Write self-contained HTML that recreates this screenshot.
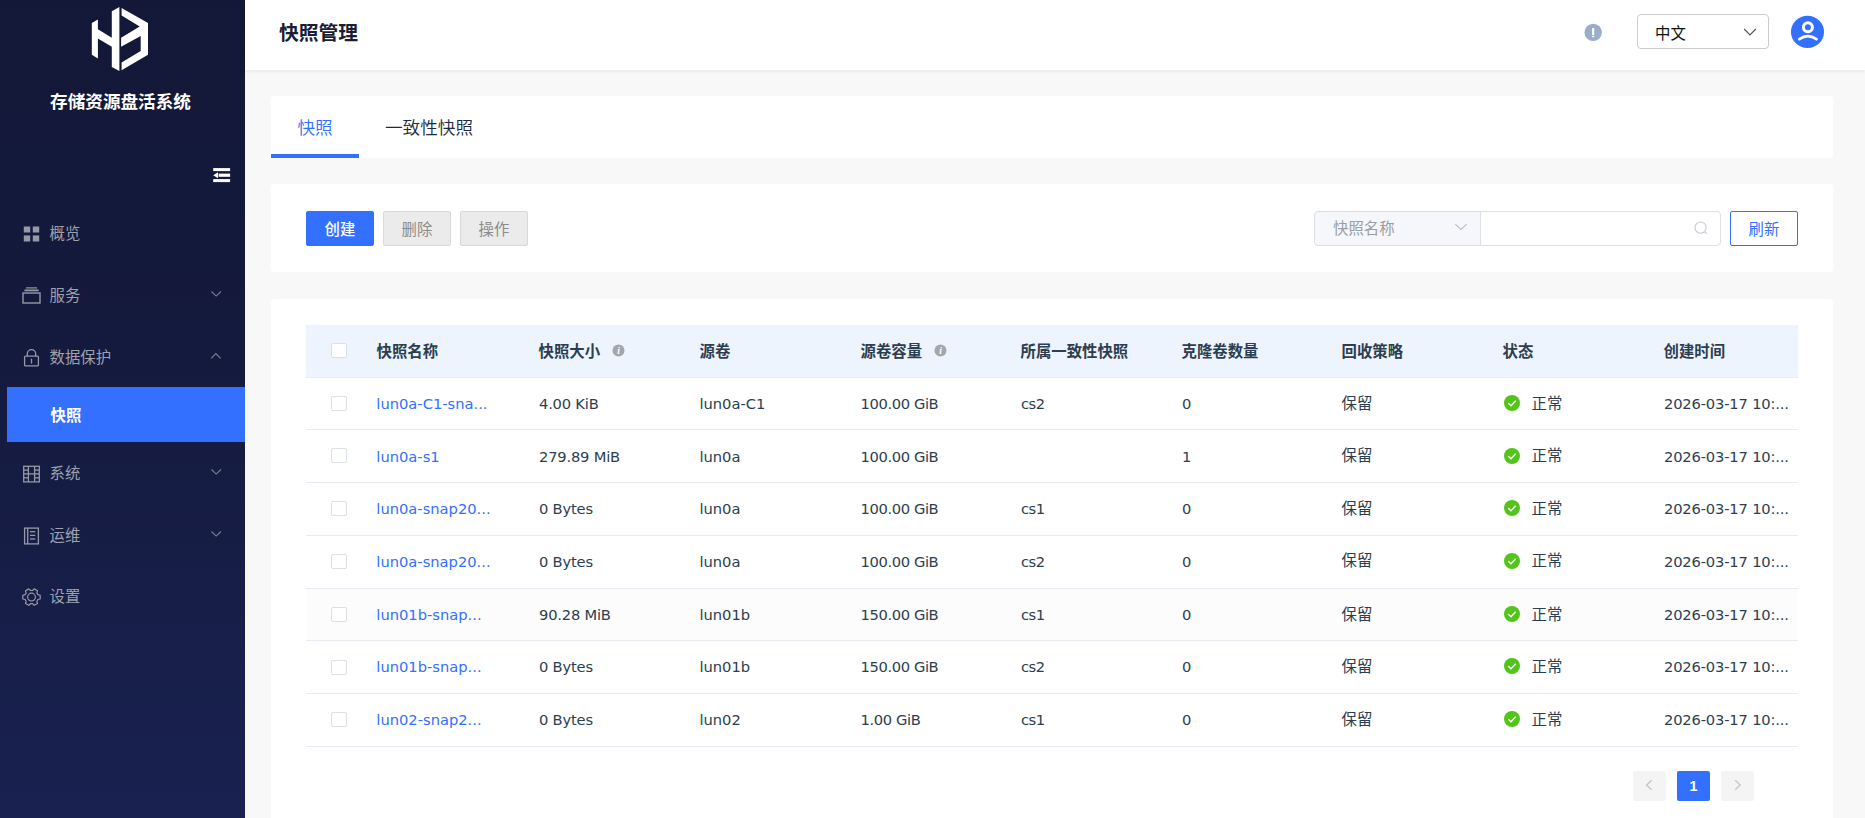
<!DOCTYPE html>
<html lang="zh-CN">
<head>
<meta charset="utf-8">
<title>快照管理</title>
<style>
*{box-sizing:border-box;margin:0;padding:0}
html,body{width:1865px;height:818px;overflow:hidden}
body{position:relative;background:#f8f8f9;font-family:"Liberation Sans","Noto Sans CJK SC",sans-serif;font-size:15.4px;color:#303133}
.abs{position:absolute}
#side{position:absolute;left:0;top:0;width:245px;height:818px;background:linear-gradient(180deg,#131838 0%,#141a3d 40%,#192150 100%)}
#side .title{position:absolute;left:0;width:241px;top:89px;height:26px;line-height:26px;text-align:center;color:#fff;font-weight:700;font-size:17.6px}
.mi{position:absolute;left:0;width:245px;height:55px;line-height:55px;color:#9ea1ae;font-size:15.4px}
.mi .tx{position:absolute;left:49.5px;top:.7px}
.mi svg{position:absolute}
.mi.act{left:7px;width:238px;background:#3370ff;color:#fff;font-weight:700}
.mi.act .tx{left:43.5px}
#hdr{position:absolute;left:245px;top:0;width:1620px;height:70px;background:#fff;box-shadow:0 1px 4px rgba(0,21,41,.08)}
#hdr h1{position:absolute;left:34px;top:17.5px;font-size:19.8px;line-height:30px;font-weight:700;color:#1a1f36}
.card{position:absolute;background:#fff;border-radius:4px}
.tab{position:absolute;top:1px;height:62px;line-height:62px;font-size:17.6px;font-weight:350;color:#1f2a3d}
.btn{position:absolute;top:27px;height:35px;line-height:35px;width:68px;text-align:center;border-radius:2px;font-size:15.4px;border:1px solid transparent}
.btn.pri{background:#3370ff;border-color:#3370ff;color:#fff;font-weight:500}
.btn.dis{background:#ebebeb;border-color:#d9d9d9;color:#8c8c8c}
.btn.ol{background:#fff;border-color:#3370ff;color:#3370ff}
#tbl{position:absolute;left:35px;top:25.6px;width:1492px}
.tr{position:relative;height:52.8px;line-height:52.8px;border-bottom:1px solid #e6ebf5;white-space:nowrap}
.tr.th{background:#eef4fd;font-weight:700;color:#2c3e50;border-bottom:0}
.tr.th:after{content:'';position:absolute;left:0;right:0;top:52.4px;height:1px;background:#e6ebf5;z-index:2}
.tr span.c{position:absolute;top:0;height:52px}
.cb{position:absolute;left:24.8px;top:18.3px;width:16px;height:15px;border:1px solid #dcdfe6;border-radius:2px;background:#fff}
.tr.hv{background:#fcfcfc}
.tr.up span.c,.tr.up .ok{margin-top:-.8px}
.tr.up2 span.c,.tr.up2 .ok{margin-top:-.5px}
.tr span.n6,.tr span.n7{top:.2px}
.tr.th span.c{top:1px}
.lk{color:#3370ff}
.n0,.n1,.n2,.n3,.n4,.n5,.n8{font-family:"DejaVu Sans","Liberation Sans",sans-serif;font-size:14.7px;color:#2c3e50}
.tr span.n0,.tr span.n1,.tr span.n2,.tr span.n3,.tr span.n4,.tr span.n5,.tr span.n8{top:.7px}
.n1{letter-spacing:-.2px}.n3{letter-spacing:-.38px}.n4{letter-spacing:-.5px}.n8{letter-spacing:-.17px}
.n0{color:#3370ff}
.n6,.n7{color:#2c3e50}
.ok{position:absolute;top:17.8px;width:16px;height:16px}
.inf{display:inline-block;vertical-align:-.8px;margin-left:12.1px}
.pg{position:absolute;top:472px;width:33px;height:30px;border-radius:2px;background:#f4f4f5;text-align:center;line-height:30px;font-size:14.3px}
.pg.on{background:#3370ff;color:#fff;font-weight:700}
</style>
</head>
<body>
<div id="side">
  <svg class="abs" style="left:88px;top:4px" width="64" height="70" viewBox="88 4 64 70">
    <g fill="#fff">
      <polygon points="91.8,23 97.9,19.6 97.9,29.3 111.8,37.7 111.8,11.2 119.4,7 119.4,70.9 111.8,67 111.8,46.7 97.9,38.6 97.9,58.4 91.8,54.8"/>
      <polygon points="121.6,8 148,23 148,54.8 121.6,70.2 121.6,62.6 140.7,50.9 140.7,36 121.1,46.7 121.1,37.7 139.7,26.6 121.6,15.6"/>
    </g>
  </svg>
  <div class="title">存储资源盘活系统</div>
  <svg class="abs" style="left:212px;top:166px" width="20" height="18" viewBox="212 166 20 18"><g fill="#fff"><rect x="213.2" y="168.1" width="16.9" height="3"/><rect x="218.6" y="173.6" width="11.5" height="3.2"/><rect x="213.2" y="179.1" width="16.9" height="3"/><polygon points="213.2,175.2 218,172.2 218,178.2"/></g></svg>

  <div class="mi" style="top:205.5px">
    <svg style="left:22px;top:19px" width="20" height="18" viewBox="22 224.5 20 18"><g fill="#9699a6"><rect x="23.8" y="226" width="6.4" height="6"/><rect x="32.8" y="226" width="6.4" height="6"/><rect x="23.8" y="234.9" width="6.4" height="6.1"/><rect x="32.8" y="234.9" width="6.4" height="6.1"/></g></svg>
    <span class="tx">概览</span>
  </div>
  <div class="mi" style="top:267.5px">
    <svg style="left:20px;top:17px" width="24" height="22" viewBox="20 284.5 24 22"><g fill="none" stroke="#9699a6"><rect x="23" y="292.5" width="17" height="10" stroke-width="1.4"/><line x1="24.4" y1="289.9" x2="38.6" y2="289.9" stroke-width="1.8"/><line x1="26" y1="287.4" x2="37" y2="287.4" stroke-width="1.2"/></g></svg>
    <span class="tx">服务</span>
    <svg style="left:208px;top:20px" width="16" height="12" viewBox="208 287.5 16 12"><polyline points="211.5,291 216.2,295.6 220.9,291" fill="none" stroke="#7b7f94" stroke-width="1.1"/></svg>
  </div>
  <div class="mi" style="top:329.5px">
    <svg style="left:20px;top:16px" width="24" height="24" viewBox="20 345.5 24 24"><g fill="none" stroke="#9699a6" stroke-width="1.3"><rect x="24.6" y="355.6" width="13.8" height="9.8" rx="1"/><path d="M27.3 355.6v-2.2a4.2 4.2 0 0 1 8.4 0v2.2"/><line x1="31.5" y1="358.2" x2="31.5" y2="363"/></g></svg>
    <span class="tx">数据保护</span>
    <svg style="left:208px;top:20px" width="16" height="12" viewBox="208 349.5 16 12"><polyline points="211.2,357.8 215.9,353.1 220.6,357.8" fill="none" stroke="#7b7f94" stroke-width="1.1"/></svg>
  </div>
  <div class="mi act" style="top:387px"><span class="tx">快照</span></div>
  <div class="mi" style="top:445.5px">
    <svg style="left:20px;top:17px" width="24" height="22" viewBox="20 462.5 24 22"><g fill="none" stroke="#9699a6" stroke-width="1.3"><rect x="23.7" y="465.8" width="15.6" height="15.6"/><line x1="28.4" y1="465.8" x2="28.4" y2="481.4"/><line x1="34.6" y1="465.8" x2="34.6" y2="481.4"/><line x1="23.7" y1="473.4" x2="39.3" y2="473.4"/><line x1="23.7" y1="469.6" x2="28.4" y2="469.6"/><line x1="23.7" y1="477.3" x2="28.4" y2="477.3"/><line x1="34.6" y1="469.6" x2="39.3" y2="469.6"/><line x1="34.6" y1="477.3" x2="39.3" y2="477.3"/></g></svg>
    <span class="tx">系统</span>
    <svg style="left:208px;top:20px" width="16" height="12" viewBox="208 287.5 16 12"><polyline points="211.5,291 216.2,295.6 220.9,291" fill="none" stroke="#7b7f94" stroke-width="1.1"/></svg>
  </div>
  <div class="mi" style="top:507.5px">
    <svg style="left:20px;top:17px" width="24" height="24" viewBox="20 524.5 24 24"><g fill="none" stroke="#9699a6" stroke-width="1.3"><rect x="24.6" y="527.6" width="13.8" height="15.8"/><line x1="27.7" y1="527.6" x2="27.7" y2="543.4"/><line x1="30" y1="531.2" x2="35.3" y2="531.2"/><line x1="30" y1="534.9" x2="35.3" y2="534.9"/><line x1="30" y1="538.5" x2="35.3" y2="538.5"/></g></svg>
    <span class="tx">运维</span>
    <svg style="left:208px;top:20px" width="16" height="12" viewBox="208 287.5 16 12"><polyline points="211.5,291 216.2,295.6 220.9,291" fill="none" stroke="#7b7f94" stroke-width="1.1"/></svg>
  </div>
  <div class="mi" style="top:568.5px">
    <svg style="left:20px;top:16px" width="24" height="24" viewBox="20 584.5 24 24"><g fill="none" stroke="#9699a6" stroke-width="1.2"><circle cx="31.5" cy="596.6" r="3.9"/><path d="M37.94 594.20 L40.19 594.73 L40.19 598.47 L37.94 599.00 L36.86 600.81 L37.51 602.96 L34.18 604.83 L32.58 603.21 L30.42 603.21 L28.82 604.83 L25.49 602.96 L26.14 600.81 L25.06 599.00 L22.81 598.47 L22.81 594.73 L25.06 594.20 L26.14 592.39 L25.49 590.24 L28.82 588.37 L30.42 589.99 L32.58 589.99 L34.18 588.37 L37.51 590.24 L36.86 592.39Z" stroke-linejoin="round"/></g></svg>
    <span class="tx">设置</span>
  </div>
</div>

<div id="hdr">
  <h1>快照管理</h1>
  <svg class="abs" style="left:1338px;top:22px" width="20" height="20" viewBox="0 0 20 20"><circle cx="10.2" cy="10.35" r="8.7" fill="#9aaeca"/><rect x="9.05" y="6.1" width="2.2" height="7" fill="#fff"/><rect x="9.05" y="13.9" width="2.2" height="1.3" fill="#fff"/></svg>
  <div class="abs" style="left:1392px;top:14px;width:132px;height:35px;border:1px solid #ccc;border-radius:4px;background:#fff">
    <span class="abs" style="left:17px;line-height:35px;font-size:15.4px;color:#111;top:1px">中文</span>
    <svg class="abs" style="left:104px;top:11px" width="16" height="12" viewBox="0 0 16 12"><polyline points="2.2,3 8,8.8 13.8,3" fill="none" stroke="#555" stroke-width="1.2"/></svg>
  </div>
  <svg class="abs" style="left:1545px;top:15px" width="36" height="34" viewBox="0 0 36 34"><ellipse cx="17.5" cy="16.9" rx="16.5" ry="16.1" fill="#3370ff"/><circle cx="17.9" cy="12.2" r="4.5" fill="none" stroke="#fff" stroke-width="3"/><path d="M9.4 24.1Q17.9 18.1 26.4 24.1" fill="none" stroke="#fff" stroke-width="2.8" stroke-linecap="round"/></svg>
</div>

<div class="card" style="left:271px;top:96px;width:1562px;height:62px;border-radius:4px 4px 0 0">
  <div class="tab" style="left:26.5px;color:#3370ff">快照</div>
  <div class="tab" style="left:114px">一致性快照</div>
  <div class="abs" style="left:0;top:58px;width:88px;height:4px;background:#3370ff"></div>
</div>

<div class="card" style="left:271px;top:184px;width:1562px;height:88px">
  <div class="btn pri" style="left:35px">创建</div>
  <div class="btn dis" style="left:112px">删除</div>
  <div class="btn dis" style="left:189px">操作</div>
  <div class="abs" style="left:1043px;top:27px;width:167px;height:35px;border:1px solid #dcdfe6;border-radius:4px 0 0 4px;background:#f5f7fa">
    <span class="abs" style="left:18px;top:0;line-height:34px;color:#9a9da3">快照名称</span>
    <svg class="abs" style="left:138.6px;top:9.3px" width="14" height="12" viewBox="0 0 14 12"><polyline points="1.3,3.1 7,8.5 12.7,3.1" fill="none" stroke="#b9bdc5" stroke-width="1.1"/></svg>
  </div>
  <div class="abs" style="left:1209px;top:27px;width:241px;height:35px;border:1px solid #dcdfe6;border-radius:0 4px 4px 0;background:#fff">
    <svg class="abs" style="left:211.4px;top:7.2px" width="18" height="18" viewBox="0 0 18 18"><circle cx="8.6" cy="8.6" r="5.6" fill="none" stroke="#c6cad2" stroke-width="1.1"/><line x1="12.6" y1="12.6" x2="14.9" y2="14.9" stroke="#c6cad2" stroke-width="1.1"/></svg>
  </div>
  <div class="btn ol" style="left:1459px">刷新</div>
</div>
<div class="card" style="left:271px;top:299px;width:1562px;height:540px">
<div id="tbl">
<div class="tr th"><i class="cb"></i><span class="c" style="left:70.5px">快照名称</span><span class="c" style="left:232.5px">快照大小<svg class="inf" width="13" height="13" viewBox="0 0 13 13"><circle cx="6.5" cy="6.5" r="6" fill="#a3a6ad"/><text x="6.5" y="10" text-anchor="middle" font-family="Liberation Serif,serif" font-style="italic" font-weight="700" font-size="9.5" fill="#fff">i</text></svg></span><span class="c" style="left:393.5px">源卷</span><span class="c" style="left:554.5px">源卷容量<svg class="inf" width="13" height="13" viewBox="0 0 13 13"><circle cx="6.5" cy="6.5" r="6" fill="#a3a6ad"/><text x="6.5" y="10" text-anchor="middle" font-family="Liberation Serif,serif" font-style="italic" font-weight="700" font-size="9.5" fill="#fff">i</text></svg></span><span class="c" style="left:714.5px">所属一致性快照</span><span class="c" style="left:875.5px">克隆卷数量</span><span class="c" style="left:1035.5px">回收策略</span><span class="c" style="left:1196.5px">状态</span><span class="c" style="left:1357.5px">创建时间</span></div>
<div class="tr"><i class="cb"></i><span class="c lk n0" style="left:70.3px">lun0a-C1-sna...</span><span class="c n1" style="left:233px">4.00 KiB</span><span class="c n2" style="left:393.4px">lun0a-C1</span><span class="c n3" style="left:554.5px">100.00 GiB</span><span class="c n4" style="left:715px">cs2</span><span class="c n5" style="left:876px">0</span><span class="c n6" style="left:1035.5px">保留</span><svg class="ok" style="left:1198px" viewBox="0 0 16 16"><circle cx="8" cy="8" r="8" fill="#52c41a"/><polyline points="4.3,8.2 7,10.8 11.7,5.8" fill="none" stroke="#fff" stroke-width="1.35"/></svg><span class="c n7" style="left:1225.5px">正常</span><span class="c n8" style="left:1358px">2026-03-17 10:...</span></div>
<div class="tr"><i class="cb"></i><span class="c lk n0" style="left:70.3px">lun0a-s1</span><span class="c n1" style="left:233px">279.89 MiB</span><span class="c n2" style="left:393.4px">lun0a</span><span class="c n3" style="left:554.5px">100.00 GiB</span><span class="c n4" style="left:715px"></span><span class="c n5" style="left:876px">1</span><span class="c n6" style="left:1035.5px">保留</span><svg class="ok" style="left:1198px" viewBox="0 0 16 16"><circle cx="8" cy="8" r="8" fill="#52c41a"/><polyline points="4.3,8.2 7,10.8 11.7,5.8" fill="none" stroke="#fff" stroke-width="1.35"/></svg><span class="c n7" style="left:1225.5px">正常</span><span class="c n8" style="left:1358px">2026-03-17 10:...</span></div>
<div class="tr up2"><i class="cb"></i><span class="c lk n0" style="left:70.3px">lun0a-snap20...</span><span class="c n1" style="left:233px">0 Bytes</span><span class="c n2" style="left:393.4px">lun0a</span><span class="c n3" style="left:554.5px">100.00 GiB</span><span class="c n4" style="left:715px">cs1</span><span class="c n5" style="left:876px">0</span><span class="c n6" style="left:1035.5px">保留</span><svg class="ok" style="left:1198px" viewBox="0 0 16 16"><circle cx="8" cy="8" r="8" fill="#52c41a"/><polyline points="4.3,8.2 7,10.8 11.7,5.8" fill="none" stroke="#fff" stroke-width="1.35"/></svg><span class="c n7" style="left:1225.5px">正常</span><span class="c n8" style="left:1358px">2026-03-17 10:...</span></div>
<div class="tr up2"><i class="cb"></i><span class="c lk n0" style="left:70.3px">lun0a-snap20...</span><span class="c n1" style="left:233px">0 Bytes</span><span class="c n2" style="left:393.4px">lun0a</span><span class="c n3" style="left:554.5px">100.00 GiB</span><span class="c n4" style="left:715px">cs2</span><span class="c n5" style="left:876px">0</span><span class="c n6" style="left:1035.5px">保留</span><svg class="ok" style="left:1198px" viewBox="0 0 16 16"><circle cx="8" cy="8" r="8" fill="#52c41a"/><polyline points="4.3,8.2 7,10.8 11.7,5.8" fill="none" stroke="#fff" stroke-width="1.35"/></svg><span class="c n7" style="left:1225.5px">正常</span><span class="c n8" style="left:1358px">2026-03-17 10:...</span></div>
<div class="tr hv"><i class="cb"></i><span class="c lk n0" style="left:70.3px">lun01b-snap...</span><span class="c n1" style="left:233px">90.28 MiB</span><span class="c n2" style="left:393.4px">lun01b</span><span class="c n3" style="left:554.5px">150.00 GiB</span><span class="c n4" style="left:715px">cs1</span><span class="c n5" style="left:876px">0</span><span class="c n6" style="left:1035.5px">保留</span><svg class="ok" style="left:1198px" viewBox="0 0 16 16"><circle cx="8" cy="8" r="8" fill="#52c41a"/><polyline points="4.3,8.2 7,10.8 11.7,5.8" fill="none" stroke="#fff" stroke-width="1.35"/></svg><span class="c n7" style="left:1225.5px">正常</span><span class="c n8" style="left:1358px">2026-03-17 10:...</span></div>
<div class="tr up"><i class="cb"></i><span class="c lk n0" style="left:70.3px">lun01b-snap...</span><span class="c n1" style="left:233px">0 Bytes</span><span class="c n2" style="left:393.4px">lun01b</span><span class="c n3" style="left:554.5px">150.00 GiB</span><span class="c n4" style="left:715px">cs2</span><span class="c n5" style="left:876px">0</span><span class="c n6" style="left:1035.5px">保留</span><svg class="ok" style="left:1198px" viewBox="0 0 16 16"><circle cx="8" cy="8" r="8" fill="#52c41a"/><polyline points="4.3,8.2 7,10.8 11.7,5.8" fill="none" stroke="#fff" stroke-width="1.35"/></svg><span class="c n7" style="left:1225.5px">正常</span><span class="c n8" style="left:1358px">2026-03-17 10:...</span></div>
<div class="tr up"><i class="cb"></i><span class="c lk n0" style="left:70.3px">lun02-snap2...</span><span class="c n1" style="left:233px">0 Bytes</span><span class="c n2" style="left:393.4px">lun02</span><span class="c n3" style="left:554.5px">1.00 GiB</span><span class="c n4" style="left:715px">cs1</span><span class="c n5" style="left:876px">0</span><span class="c n6" style="left:1035.5px">保留</span><svg class="ok" style="left:1198px" viewBox="0 0 16 16"><circle cx="8" cy="8" r="8" fill="#52c41a"/><polyline points="4.3,8.2 7,10.8 11.7,5.8" fill="none" stroke="#fff" stroke-width="1.35"/></svg><span class="c n7" style="left:1225.5px">正常</span><span class="c n8" style="left:1358px">2026-03-17 10:...</span></div>
</div>
<div class="pg" style="left:1362px"><svg width="33" height="30" viewBox="0 0 33 30"><polyline points="18.6,9.2 13.6,14 18.6,18.8" fill="none" stroke="#c0c4cc" stroke-width="1.3"/></svg></div>
<div class="pg on" style="left:1406px">1</div>
<div class="pg" style="left:1450px"><svg width="33" height="30" viewBox="0 0 33 30"><polyline points="14.2,9.2 19.2,14 14.2,18.8" fill="none" stroke="#c0c4cc" stroke-width="1.3"/></svg></div>
</div>
</body>
</html>
